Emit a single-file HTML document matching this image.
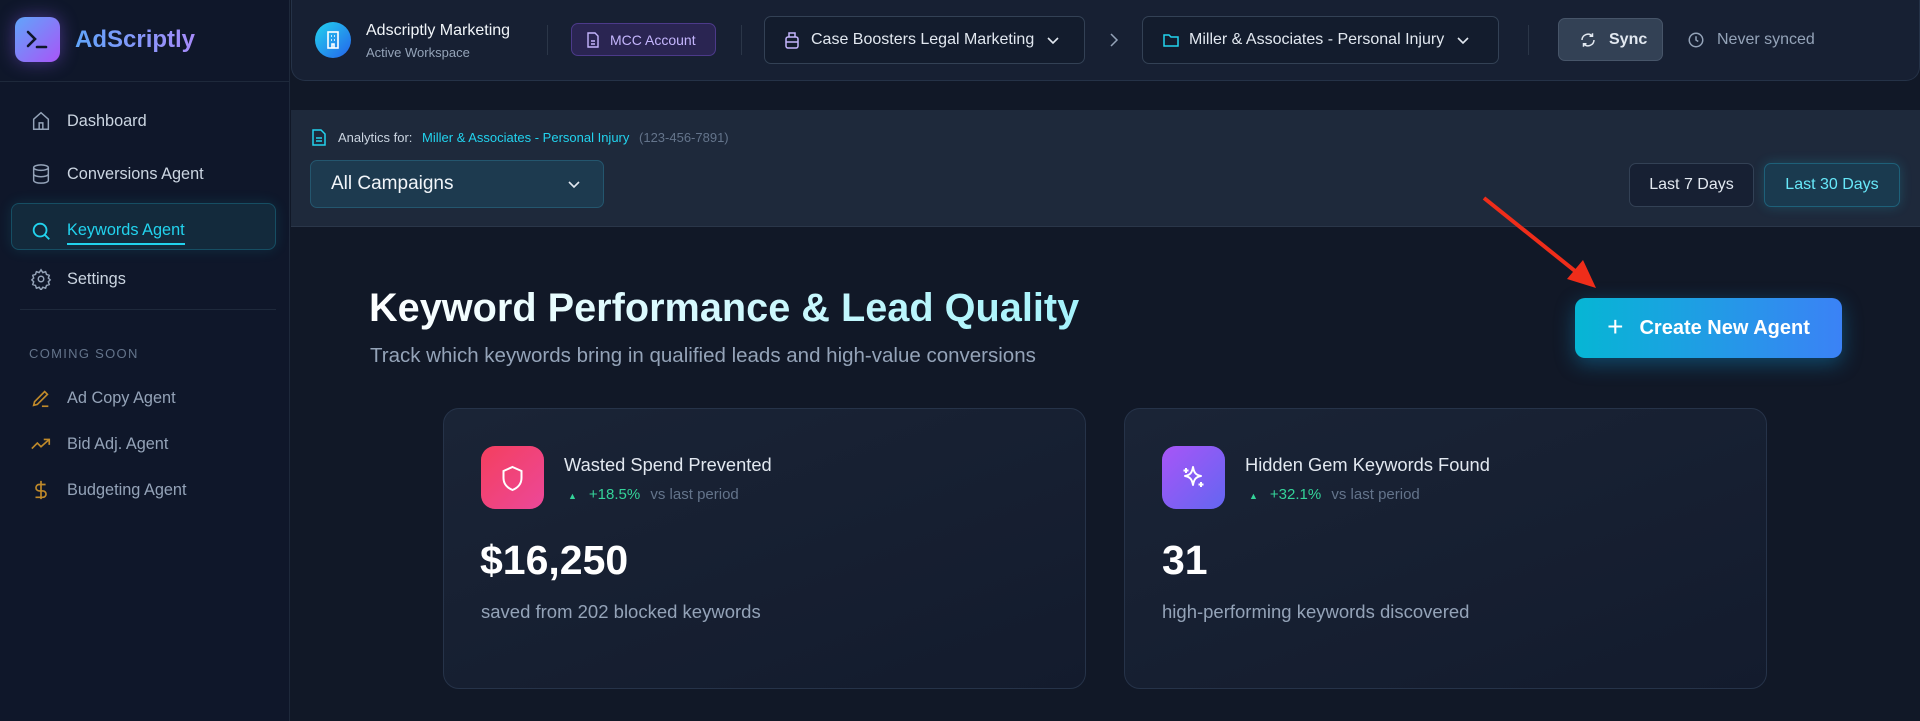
<!DOCTYPE html>
<html><head><meta charset="utf-8">
<style>
*{box-sizing:border-box;margin:0;padding:0}
body{width:1920px;height:721px;overflow:hidden;background:#111827;font-family:"Liberation Sans",sans-serif;color:#e2e8f0;position:relative}
.abs{position:absolute}
.sidebar{left:0;top:0;width:290px;height:721px;background:#0f172a;border-right:1px solid #1e293b}
.logo-line{left:0;top:81px;width:290px;height:1px;background:#1e293b}
.logo{left:15px;top:17px;width:45px;height:45px;border-radius:10px;background:linear-gradient(135deg,#60a5fa,#a855f7);box-shadow:0 0 18px rgba(139,92,246,.45)}
.brand{left:75px;top:26px;font-size:24px;font-weight:bold;background:linear-gradient(90deg,#60a5fa,#a78bfa);-webkit-background-clip:text;color:transparent}
.nav{left:30px;font-size:16.3px;color:#cbd5e1;display:flex;align-items:center;gap:0}
.nav svg{width:22px;height:22px;margin-right:15px}
.active{left:11px;top:203px;width:265px;height:47px;border:1px solid #164e63;background:#132a3c;border-radius:8px;box-shadow:0 0 14px rgba(34,211,238,.12)}
.hdr{left:291px;top:0;width:1629px;height:81px;background:#172033;border:1px solid #253247;border-top:none;border-radius:0 0 14px 14px}
.pill{border:1px solid #334155;border-radius:7px;background:#131c2d;display:flex;align-items:center;font-size:16px;color:#e2e8f0}
.div{width:1px;height:30px;background:#2b3648;top:25px}
.panel{left:291px;top:110px;width:1629px;height:117px;background:#1e293b;border-bottom:1px solid #2a3649}
.card{width:643px;height:281px;top:408px;border:1px solid #263349;border-radius:16px;background:linear-gradient(160deg,#1a2436,#131b2d)}
</style></head><body>
<div class="abs sidebar"></div>
<div class="abs logo-line"></div>
<div class="abs logo"><svg width="45" height="45" viewBox="0 0 45 45"><path d="M13 15l7 7-7 7" stroke="#0f172a" stroke-width="2.6" fill="none" stroke-linecap="round"/><path d="M22 30h9" stroke="#0f172a" stroke-width="2.6" stroke-linecap="round"/></svg></div>
<div class="abs brand">AdScriptly</div>

<div class="abs active"></div>
<div class="abs nav" style="top:110px"><svg viewBox="0 0 24 24" fill="none" stroke="#94a3b8" stroke-width="1.6"><path d="M4 10l8-7 8 7v11H4z"/><path d="M10 21v-7h4v7"/></svg>Dashboard</div>
<div class="abs nav" style="top:163px"><svg viewBox="0 0 24 24" fill="none" stroke="#94a3b8" stroke-width="1.6"><ellipse cx="12" cy="5" rx="8" ry="3"/><path d="M4 5v14c0 1.7 3.6 3 8 3s8-1.3 8-3V5M4 12c0 1.7 3.6 3 8 3s8-1.3 8-3"/></svg>Conversions Agent</div>
<div class="abs nav" style="top:216px;color:#22d3ee"><svg viewBox="0 0 24 24" fill="none" stroke="#22d3ee" stroke-width="2"><circle cx="11" cy="11" r="7"/><path d="M16 16l5 5"/></svg><span style="border-bottom:2px solid #22d3ee;padding-bottom:3px;margin-top:5px">Keywords Agent</span></div>
<div class="abs nav" style="top:268px"><svg viewBox="0 0 24 24" fill="none" stroke="#94a3b8" stroke-width="1.6"><circle cx="12" cy="12" r="3"/><path d="M12 2l2 3 3-1 1 3 3 1-1 3 2 2-2 2 1 3-3 1-1 3-3-1-2 3-2-3-3 1-1-3-3-1 1-3-2-2 2-2-1-3 3-1 1-3 3 1z"/></svg>Settings</div>
<div class="abs" style="left:20px;top:309px;width:256px;height:1px;background:#1e293b"></div>
<div class="abs" style="left:29px;top:346px;font-size:13px;letter-spacing:1.3px;color:#64748b">COMING SOON</div>
<div class="abs nav" style="top:387px;color:#94a3b8"><svg viewBox="0 0 24 24" fill="none" stroke="#c08a2a" stroke-width="1.8"><path d="M4 20l1-4 11-11 3 3-11 11z"/><path d="M13 21h7"/></svg>Ad Copy Agent</div>
<div class="abs nav" style="top:433px;color:#94a3b8"><svg viewBox="0 0 24 24" fill="none" stroke="#c08a2a" stroke-width="1.8"><path d="M2 17l6-6 4 4 9-8"/><path d="M15 7h6v6"/></svg>Bid Adj. Agent</div>
<div class="abs nav" style="top:479px;color:#94a3b8"><svg viewBox="0 0 24 24" fill="none" stroke="#c08a2a" stroke-width="1.8"><path d="M12 2v20M17 6H10a3.5 3.5 0 000 7h4a3.5 3.5 0 010 7H6"/></svg>Budgeting Agent</div>

<div class="abs hdr"></div>
<div class="abs" style="left:315px;top:22px;width:36px;height:36px;border-radius:50%;background:linear-gradient(135deg,#22d3ee,#2563eb)"><svg width="36" height="36" viewBox="0 0 36 36" fill="none" stroke="#fff" stroke-width="1.6"><rect x="13" y="10" width="10" height="16"/><path d="M16 14h1M19 14h1M16 18h1M19 18h1M17 26v-4h2v4"/></svg></div>
<div class="abs" style="left:366px;top:22px;font-size:16px;color:#f1f5f9">Adscriptly Marketing</div>
<div class="abs" style="left:366px;top:45px;font-size:13px;color:#94a3b8">Active Workspace</div>
<div class="abs div" style="left:547px"></div>
<div class="abs pill" style="left:571px;top:23px;width:145px;height:33px;border-color:#4c3a8a;background:#2a2552;color:#c4b5fd;font-size:14px;padding-left:14px"><svg width="14" height="16" viewBox="0 0 14 16" fill="none" stroke="#c4b5fd" stroke-width="1.4" style="margin-right:10px"><path d="M2 1h7l3 3v11H2z"/><path d="M5 9h4M5 12h4"/></svg>MCC Account</div>
<div class="abs div" style="left:741px"></div>
<div class="abs pill" style="left:764px;top:16px;width:321px;height:48px;padding-left:20px"><svg width="14" height="18" viewBox="0 0 14 18" fill="none" stroke="#c4b5fd" stroke-width="1.5" style="margin-right:12px"><rect x="1" y="6" width="12" height="11" rx="2"/><path d="M4 6V2h6v4M1 11h12"/></svg>Case Boosters Legal Marketing<svg width="14" height="10" viewBox="0 0 14 10" fill="none" stroke="#e2e8f0" stroke-width="1.6" style="margin-left:12px"><path d="M2 3l5 5 5-5"/></svg></div>
<svg class="abs" style="left:1108px;top:32px" width="12" height="16" viewBox="0 0 12 16" fill="none" stroke="#94a3b8" stroke-width="1.5"><path d="M3 2l6 6-6 6"/></svg>
<div class="abs pill" style="left:1142px;top:16px;width:357px;height:48px;padding-left:20px"><svg width="16" height="14" viewBox="0 0 16 14" fill="none" stroke="#22d3ee" stroke-width="1.5" style="margin-right:10px"><path d="M1 2h5l2 2h7v9H1z"/></svg>Miller &amp; Associates - Personal Injury<svg width="14" height="10" viewBox="0 0 14 10" fill="none" stroke="#e2e8f0" stroke-width="1.6" style="margin-left:12px"><path d="M2 3l5 5 5-5"/></svg></div>
<div class="abs div" style="left:1528px"></div>
<div class="abs pill" style="left:1558px;top:18px;width:105px;height:43px;background:#334155;border-color:#475569;padding-left:20px;font-weight:bold"><svg width="18" height="18" viewBox="0 0 24 24" fill="none" stroke="#e2e8f0" stroke-width="2" style="margin-right:12px"><path d="M20 12a8 8 0 01-14 5M4 12a8 8 0 0114-5"/><path d="M18 3v4h-4M6 21v-4h4"/></svg>Sync</div>
<svg class="abs" style="left:1687px;top:31px" width="18" height="18" viewBox="0 0 24 24" fill="none" stroke="#94a3b8" stroke-width="2"><circle cx="12" cy="12" r="9"/><path d="M12 7v5l3 2"/></svg>
<div class="abs" style="left:1717px;top:31px;font-size:16px;color:#94a3b8">Never synced</div>

<div class="abs panel"></div>
<svg class="abs" style="left:312px;top:129px" width="14" height="17" viewBox="0 0 14 17" fill="none" stroke="#22d3ee" stroke-width="1.5"><path d="M1 1h8l4 4v11H1z"/><path d="M4 9h6M4 12h6"/></svg>
<div class="abs" style="left:338px;top:130px;font-size:13px;color:#cbd5e1">Analytics for: <span style="color:#22d3ee;margin-left:6px">Miller &amp; Associates - Personal Injury</span> <span style="color:#64748b;margin-left:6px">(123-456-7891)</span></div>
<div class="abs pill" style="left:310px;top:160px;width:294px;height:48px;background:#1d3a4f;border-color:#24566e;padding-left:20px;font-size:19px;color:#f1f5f9">All Campaigns<svg width="14" height="10" viewBox="0 0 14 10" fill="none" stroke="#e2e8f0" stroke-width="1.6" style="margin-left:auto;margin-right:22px"><path d="M2 3l5 5 5-5"/></svg></div>
<div class="abs pill" style="left:1629px;top:163px;width:125px;height:44px;justify-content:center;font-size:16px;background:#172033">Last 7 Days</div>
<div class="abs pill" style="left:1764px;top:163px;width:136px;height:44px;justify-content:center;font-size:16px;background:#1a3a4f;border-color:#1e6079;color:#67e8f9;box-shadow:0 0 12px rgba(34,211,238,.2)">Last 30 Days</div>

<div class="abs" style="left:369px;top:286px;font-size:39.7px;font-weight:bold;background:linear-gradient(90deg,#ffffff,#a5f3fc);-webkit-background-clip:text;color:transparent;white-space:nowrap">Keyword Performance &amp; Lead Quality</div>
<div class="abs" style="left:370px;top:344px;font-size:20.5px;color:#94a3b8;white-space:nowrap">Track which keywords bring in qualified leads and high-value conversions</div>

<div class="abs" style="left:1575px;top:298px;width:267px;height:60px;border-radius:10px;background:linear-gradient(90deg,#06b6d4,#3b82f6);box-shadow:0 6px 20px rgba(14,165,233,.35);display:flex;align-items:center;justify-content:center;font-size:20px;font-weight:bold;color:#fff"><span style="font-size:28px;font-weight:normal;margin-right:16px;margin-top:-3px">+</span>Create New Agent</div>
<svg class="abs" style="left:0;top:0" width="1920" height="721"><path d="M1484 198L1580 275" stroke="#ef2d1a" stroke-width="4"/><path d="M1596 288L1567 279L1583 260Z" fill="#ef2d1a"/></svg>

<div class="abs card" style="left:443px"></div>
<div class="abs card" style="left:1124px"></div>
<div class="abs" style="left:481px;top:446px;width:63px;height:63px;border-radius:14px;background:linear-gradient(135deg,#f43f5e,#ec4899)"><svg width="63" height="63" viewBox="0 0 63 63" fill="none" stroke="#fff" stroke-width="2"><path d="M31.5 21l9 4v7c0 6-4 10-9 12-5-2-9-6-9-12v-7z"/></svg></div>
<div class="abs" style="left:1162px;top:446px;width:63px;height:63px;border-radius:14px;background:linear-gradient(135deg,#a855f7,#6366f1)"><svg width="63" height="63" viewBox="0 0 63 63" fill="none" stroke="#fff" stroke-width="2" stroke-linejoin="round"><path d="M31 21c1 6 3 8 8 9-5 1-7 3-8 9-1-6-3-8-8-9 5-1 7-3 8-9z"/><path d="M24 22v5M21.5 24.5h5M39 36v5M36.5 38.5h5"/></svg></div>
<div class="abs" style="left:564px;top:454px;font-size:18.3px;color:#e2e8f0">Wasted Spend Prevented</div>
<div class="abs" style="left:1245px;top:454px;font-size:18.3px;color:#e2e8f0">Hidden Gem Keywords Found</div>
<div class="abs" style="left:568px;top:486px;font-size:15px;color:#34d399"><span style="font-size:9px;margin-right:12px">▲</span>+18.5% <span style="color:#64748b;margin-left:6px">vs last period</span></div>
<div class="abs" style="left:1249px;top:486px;font-size:15px;color:#34d399"><span style="font-size:9px;margin-right:12px">▲</span>+32.1% <span style="color:#64748b;margin-left:6px">vs last period</span></div>
<div class="abs" style="left:480px;top:537px;font-size:41px;font-weight:bold;color:#fff">$16,250</div>
<div class="abs" style="left:1162px;top:537px;font-size:41px;font-weight:bold;color:#fff">31</div>
<div class="abs" style="left:481px;top:601px;font-size:18.5px;color:#94a3b8">saved from 202 blocked keywords</div>
<div class="abs" style="left:1162px;top:601px;font-size:18.5px;color:#94a3b8">high-performing keywords discovered</div>
</body></html>
